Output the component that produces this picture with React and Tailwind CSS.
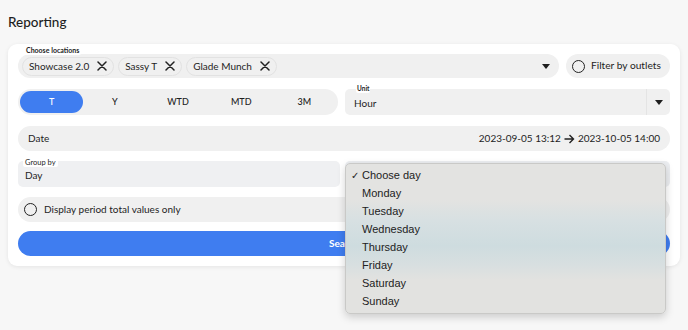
import React from "react";

const chips = ["Showcase 2.0", "Sassy T", "Glade Munch"];
const periods = ["T", "Y", "WTD", "MTD", "3M"];
const days = ["Monday", "Tuesday", "Wednesday", "Thursday", "Friday", "Saturday", "Sunday"];

function Caret() {
  return (
    <svg width="8" height="5" viewBox="0 0 8 5">
      <path d="M0 0h8L4 5z" fill="#1f1f1f" />
    </svg>
  );
}

function Circle() {
  return <span className="w-[13px] h-[13px] rounded-full border-[1.5px] border-[#222] shrink-0" />;
}

function XIcon() {
  return (
    <svg width="10" height="10" viewBox="0 0 10 10">
      <path d="M1 1l8 8M9 1l-8 8" stroke="#222" strokeWidth="1.5" strokeLinecap="round" />
    </svg>
  );
}

export default function App() {
  return (
    <div
      className="w-[688px] h-[330px] bg-[#f7f7f7] text-[#1e1e1e] overflow-hidden"
      style={{ fontFamily: "Lato, 'Noto Sans', sans-serif" }}
    >
      <h1 className="px-[8px] pt-[12px] h-[44px] text-[13.5px] font-medium">Reporting</h1>

      <div className="mx-[8px] bg-white rounded-[9px] shadow-[0_1px_4px_rgba(0,0,0,0.08)] px-[10px] pt-[10px] pb-[10px] flex flex-col">
        {/* locations */}
        <div className="flex gap-[7px] h-[24px]">
          <div className="relative flex-1 bg-[#f0f0f0] rounded-full flex items-center pl-[4px] pr-[9px] gap-[4px]">
            <span className="absolute left-[6px] -top-[8px] bg-white px-[2px] rounded-[2px] text-[7px] font-bold leading-[9px]">
              Choose locations
            </span>
            {chips.map((c) => (
              <span
                key={c}
                className="h-[19px] border border-[#e2e2e2] rounded-full flex items-center gap-[8px] pl-[6px] pr-[6px] text-[10px]"
              >
                {c}
                <XIcon />
              </span>
            ))}
            <span className="ml-auto">
              <Caret />
            </span>
          </div>
          <div className="w-[104px] bg-[#f0f0f0] rounded-full flex items-center gap-[6px] pl-[6px] text-[10.2px]">
            <Circle />
            Filter by outlets
          </div>
        </div>

        {/* period + unit */}
        <div className="grid grid-cols-[320px_1fr] gap-[7px] h-[26px] mt-[11px]">
          <div className="bg-[#f0f0f0] rounded-full p-[2px] grid grid-cols-5 text-[9px] font-medium">
            {periods.map((p, i) => (
              <span
                key={p}
                className={
                  i === 0
                    ? "bg-[#3f7df0] text-white rounded-full flex items-center justify-center"
                    : "flex items-center justify-center"
                }
              >
                {p}
              </span>
            ))}
          </div>
          <div className="relative bg-[#f0f0f0] rounded-[5px] flex items-center pl-[9px] text-[10px]">
            <span className="absolute left-[11px] -top-[4px] bg-white px-[1px] text-[6.5px] font-bold leading-[8px] rounded-[2px]">
              Unit
            </span>
            <span className="mt-[3px]">Hour</span>
            <span className="ml-auto h-full w-[24px] border-l border-[#e4e4e4] flex items-center justify-center">
              <Caret />
            </span>
          </div>
        </div>

        {/* date */}
        <div className="h-[25px] mt-[11px] bg-[#f0f0f0] rounded-full flex items-center px-[10px] text-[10px]">
          <span>Date</span>
          <span className="ml-auto flex items-center gap-[3px]">
            2023-09-05 13:12
            <svg width="11" height="10" viewBox="0 0 11 10">
              <path d="M0.5 5h9M5.5 1l4 4-4 4" stroke="#222" strokeWidth="1.4" fill="none" />
            </svg>
            2023-10-05 14:00
          </span>
        </div>

        {/* group by */}
        <div className="grid grid-cols-[322px_1fr] gap-[5px] h-[26px] mt-[10px]">
          <div className="relative bg-[#eff0f2] rounded-[5px] pl-[7px] text-[10px] flex items-center">
            <span className="absolute left-[5px] -top-[3px] bg-white px-[2px] text-[7.5px] leading-[9px] rounded-[2px]">
              Group by
            </span>
            <span className="mt-[3px]">Day</span>
          </div>
          <div className="relative bg-[#eceef1] rounded-[5px]">
            <div
              className="absolute left-0 top-[2px] w-[321px] h-[151px] rounded-[5px] border border-[#c9c9c7] shadow-[0_3px_8px_rgba(0,0,0,0.18)] z-10 pt-[2px] text-[11px] text-[#222]"
              style={{
                fontFamily: "'Liberation Sans', Arial, sans-serif",
                background:
                  "linear-gradient(to bottom, #e3e3e1 0%, #e3e3e1 24%, #d7e0e2 38%, #cedcdf 55%, #d8dfe0 68%, #e2e2e0 78%, #e2e2e0 100%)",
              }}
            >
              <div className="h-[18px] flex items-center pl-[5px]">
                <span className="w-[11px] text-[10px]">✓</span>
                Choose day
              </div>
              {days.map((d) => (
                <div key={d} className="h-[18px] flex items-center pl-[16px]">
                  {d}
                </div>
              ))}
            </div>
          </div>
        </div>

        {/* total values */}
        <div className="h-[25px] mt-[10px] bg-[#f0f0f0] rounded-full flex items-center gap-[7px] pl-[6px] text-[10px]">
          <Circle />
          Display period total values only
        </div>

        {/* search */}
        <button className="h-[25px] mt-[9px] bg-[#3f7df0] rounded-full text-white text-[10px] font-bold">
          Search
        </button>
      </div>
    </div>
  );
}
